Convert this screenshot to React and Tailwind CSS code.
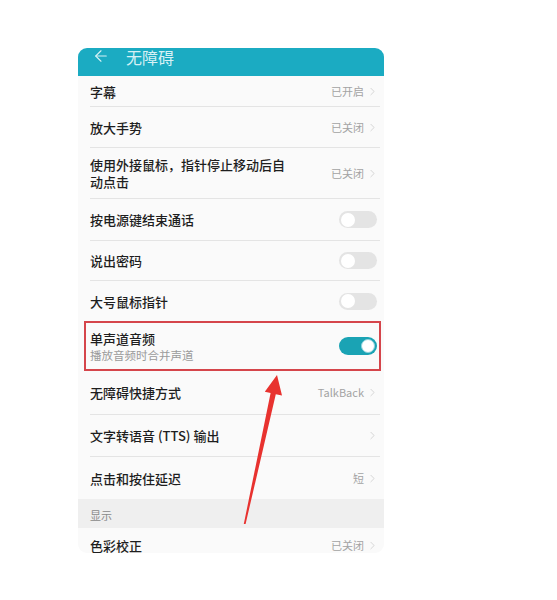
import React from 'react';
import { ArrowLeft, ChevronRight } from 'lucide-react';

const font = { fontFamily: '"Noto Sans CJK SC", "Noto Sans", sans-serif' };

function Toggle({ on }) {
  return on ? (
    <div className="w-[38px] h-[18px] rounded-full bg-[#1aa3b4] flex items-center justify-end pr-[2px]">
      <div className="w-[14px] h-[14px] rounded-full bg-white border border-[#8fd3dc]" />
    </div>
  ) : (
    <div className="w-[38px] h-[17px] rounded-full bg-[#e4e4e4] flex items-center pl-[2px]">
      <div className="w-[14px] h-[14px] rounded-full bg-white" />
    </div>
  );
}

function Value({ text }) {
  return (
    <div className="flex items-center gap-[2px] text-[11px] text-[#a3a3a3] shrink-0">
      {text && <span>{text}</span>}
      <ChevronRight size={13} strokeWidth={1.2} className="text-[#c2c2c2] -mr-[2px]" />
    </div>
  );
}

function Row({ h, label, value, toggle, divider = true, children }) {
  return (
    <div className={`relative ${h} shrink-0 flex flex-col`}>
      <div className="flex-1 flex items-center justify-between pl-3 pr-[7px]">
        {children || <span className="text-[13px] leading-[17px] text-[#1e1e1e] font-medium">{label}</span>}
        {toggle !== undefined ? <Toggle on={toggle} /> : <Value text={value} />}
      </div>
      {divider && <div className="ml-3 mr-1 h-px bg-[#e4e4e4]" />}
    </div>
  );
}

export default function App() {
  return (
    <div className="relative w-[557px] h-[600px] bg-white" style={font}>
      <div className="pt-[48px] pl-[78px]">
        <div className="w-[306px] h-[505px] rounded-[9px] overflow-hidden bg-[#fafafa] flex flex-col">
          <div className="h-[28px] shrink-0 bg-[#1babc2] flex items-start pl-[14px] gap-[16px] overflow-hidden">
            <ArrowLeft size={18} strokeWidth={1.5} className="text-[#d6f1f5] -mt-[1px]" />
            <span className="text-[16px] leading-[18px] text-[#d6f1f5]">无障碍</span>
          </div>
          <Row h="h-[31px]" label="字幕" value="已开启" />
          <Row h="h-[41px]" label="放大手势" value="已关闭" />
          <Row h="h-[51px]" value="已关闭">
            <span className="text-[13px] leading-[17px] text-[#1e1e1e] font-medium w-[205px]">使用外接鼠标，指针停止移动后自动点击</span>
          </Row>
          <Row h="h-[42px]" label="按电源键结束通话" toggle={false} />
          <Row h="h-[40px]" label="说出密码" toggle={false} />
          <Row h="h-[40px]" label="大号鼠标指针" toggle={false} divider={false} />
          <Row h="h-[50px]" toggle={true} divider={false}>
            <div className="flex flex-col">
              <span className="text-[13px] leading-[17px] text-[#1e1e1e] font-medium">单声道音频</span>
              <span className="text-[11.5px] leading-[16px] text-[#9a9a9a]">播放音频时合并声道</span>
            </div>
            <div className="absolute top-0 bottom-0 left-[6px] right-[3px] border-2 border-[#d5454b]" />
          </Row>
          <Row h="h-[44px]" label="无障碍快捷方式" value="TalkBack" />
          <Row h="h-[42px]" label="文字转语音 (TTS) 输出" value="" />
          <Row h="h-[42px]" label="点击和按住延迟" value="短" divider={false} />
          <div className="h-[29px] shrink-0 bg-[#efefef] flex items-end pl-3 pb-[6px]">
            <span className="text-[11px] leading-[14px] text-[#8a8a8a]">显示</span>
          </div>
          <div className="h-[25px] shrink-0 flex items-start justify-between pl-3 pr-[7px] pt-[9px]">
            <span className="text-[13px] leading-[17px] text-[#1e1e1e] font-medium">色彩校正</span>
            <Value text="已关闭" />
          </div>
        </div>
      </div>
      <svg className="absolute left-0 top-0 pointer-events-none" width="557" height="600">
        <polygon
          points="277,375 282,395.5 275.8,394.2 245.6,524 243.8,524 270.6,393 264.8,391.8"
          fill="#e8322f"
        />
      </svg>
    </div>
  );
}
